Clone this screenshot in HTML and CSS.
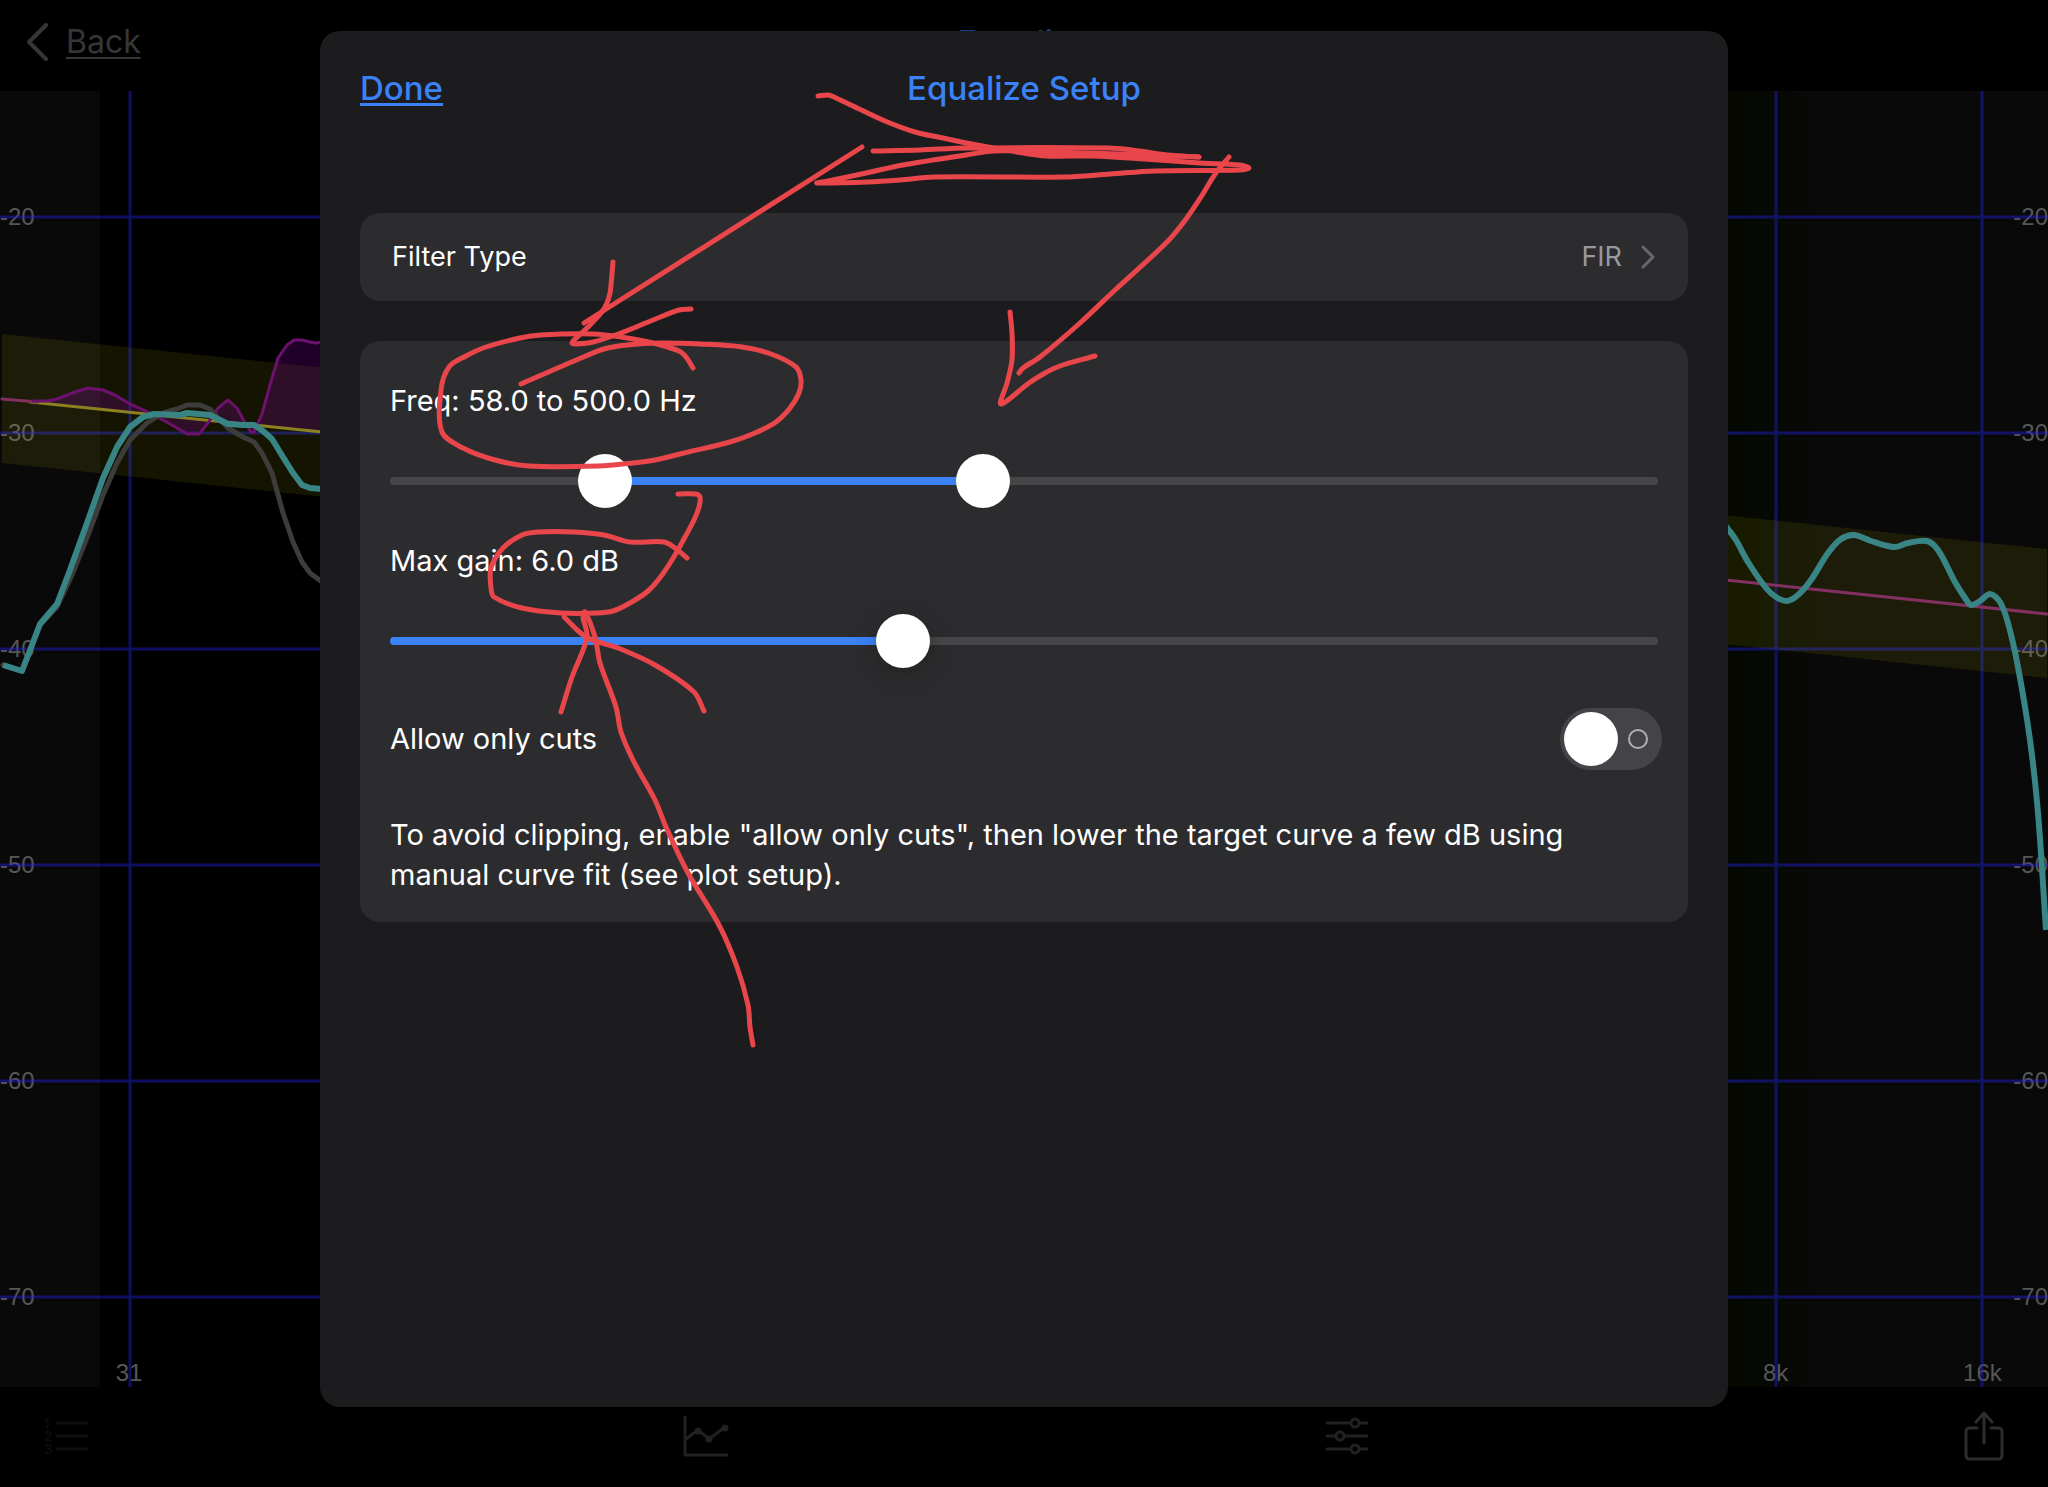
FILE: index.html
```html
<!doctype html>
<html lang="en">
<head>
    <meta charset="UTF-8">
    <meta name="viewport" content="width=device-width, initial-scale=1.0">
    <title>Equalize Setup</title>
    <link rel="stylesheet" href="styles.css">
</head>
<body>
    <div class="app">
        <header class="navbar">
            <button type="button" class="back">
                <svg width="22" height="38" viewBox="0 0 22 38"><path d="M20 2L3 19l17 17"/></svg>
                <span>Back</span>
            </button>
            <h1>Equalize</h1>
        </header>

        <main class="plot">
            <div class="scale left">
                <span>-20</span><span>-30</span><span>-40</span><span>-50</span><span>-60</span><span>-70</span>
            </div>
            <div class="scale right">
                <span>-20</span><span>-30</span><span>-40</span><span>-50</span><span>-60</span><span>-70</span>
            </div>
            <span class="freq" style="left:6.3%">31</span>
            <span class="freq" style="left:86.7%">8k</span>
            <span class="freq" style="left:96.8%">16k</span>
            <svg class="curves" viewBox="0 91 2048 1296" preserveAspectRatio="none">
                <path class="grid" d="M0 217H2048M0 433H2048M0 649H2048M0 865H2048M0 1081H2048M0 1297H2048M130 91V1387M1776 91V1387M1982 91V1387"/>
                <polygon class="band" points="2,334 2047,549 2047,678 2,463"/>
                <polygon class="filter-fill" points="3,399 33,401 47,401 57,399 75,392 88,388 103,390 115,395 130,404 148,412 163,420 177,428 187,434 199,434 208,423 218,408 228,400 237,408 245,423 251,432 254,432 262,414 270,385 278,358 287,345 294,340 302,340 310,342 315,343 322,342 322,432"/>
                <polyline class="target" points="30,402 322,432"/>
                <polyline class="target flat" points="2,399 38,402"/>
                <polyline class="target flat" points="1726,580 2047,614"/>
                <polyline class="filter" points="33,401 47,401 57,399 75,392 88,388 103,390 115,395 130,404 148,412 163,420 177,428 187,434 199,434 208,423 218,408 228,400 237,408 245,423 251,432 254,432 262,414 270,385 278,358 287,345 294,340 302,340 310,342 315,343 322,342"/>
                <polyline class="measured" points="3,665 22,671 40,625 57,607 72,575 90,530 103,495 117,463 130,440 147,423 163,413 177,409 187,405 200,405 210,409 217,417 228,428 243,437 254,442 262,453 272,473 283,513 293,542 302,562 310,573 322,582"/>
                <polyline class="result" points="3,665 22,671 32,645 40,624 57,604 70,570 87,523 103,478 117,447 130,427 143,417 154,414 180,415 187,413 210,415 228,424 243,425 254,425 263,431 272,439 283,457 293,473 302,485 310,488 322,489"/>
                <polyline class="result smooth" points="1724,524 1728,529 1736,540 1748,562 1766,588 1776,597 1787,601 1798,595 1811,580 1828,553 1841,539 1854,535 1871,541 1894,547 1908,543 1927,541 1938,550 1955,582 1965,598 1971,605 1980,601 1990,594 2000,602 2008,623 2018,667 2030,740 2038,813 2046,930"/>
            </svg>
        </main>

        <footer class="toolbar">
            <button type="button" class="faint" aria-label="Measurements">
                <svg width="44" height="44" viewBox="0 0 44 44">
                    <path d="M13 9h30M13 22h30M13 35h30"/>
                    <text x="0" y="14">1</text><text x="0" y="27">2</text><text x="0" y="40">3</text>
                </svg>
            </button>
            <button type="button" aria-label="Plot setup">
                <svg width="46" height="44" viewBox="0 0 46 44">
                    <path d="M2 3v38h42M3 25l12-9 11 9 16-12"/>
                    <circle class="dot" cx="15" cy="17" r="2"/><circle class="dot" cx="26" cy="25" r="2"/><circle class="dot" cx="42" cy="14" r="2"/>
                </svg>
            </button>
            <button type="button" aria-label="Equalize setup">
                <svg width="44" height="44" viewBox="0 0 44 44">
                    <path d="M2 9h24M35 9h7M2 22h9M20 22h22M2 35h24M35 35h7"/>
                    <circle cx="30" cy="9" r="4"/><circle cx="15" cy="22" r="4"/><circle cx="30" cy="35" r="4"/>
                </svg>
            </button>
            <button type="button" class="share" aria-label="Share">
                <svg width="40" height="50" viewBox="0 0 40 50">
                    <path d="M13 17H6q-4 0-4 4v23q0 4 4 4h28q4 0 4-4V21q0-4-4-4h-7M20 32V2M12 11l8-9 8 9"/>
                </svg>
            </button>
        </footer>
    </div>

    <section class="modal" role="dialog" aria-labelledby="title">
        <header class="modal-head">
            <button type="button" class="done">Done</button>
            <h2 id="title">Equalize Setup</h2>
        </header>

        <button type="button" class="card type-row">
            <span>Filter Type</span>
            <span class="value">FIR</span>
            <svg width="16" height="24" viewBox="0 0 16 24"><path d="M3 2l10 10L3 22"/></svg>
        </button>

        <div class="card settings">
            <label for="freq-low">Freq: 58.0 to 500.0 Hz</label>
            <div class="range" style="--from:15.5%;--to:46.6%">
                <input type="range" id="freq-low" min="0" max="1000" value="155">
                <input type="range" aria-label="Upper frequency" min="0" max="1000" value="466">
            </div>
            <label for="gain">Max gain: 6.0 dB</label>
            <div class="range single" style="--from:0%;--to:40%">
                <input type="range" id="gain" min="0" max="15" value="6">
            </div>
            <div class="switch-row">
                <label for="cuts">Allow only cuts</label>
                <input type="checkbox" class="switch" id="cuts">
            </div>
            <p>To avoid clipping, enable "allow only cuts", then lower the target curve a few dB using manual curve fit (see plot setup).</p>
        </div>

        <!-- hand-drawn markup -->
        <svg class="ink" viewBox="320 31 1408 1376">
            <polyline class="smooth" points="818,96 828,95 834,97 857,108 885,121 915,132 943,138 977,145 1017,152 1046,156 1092,156 1144,159 1200,163 1240,165 1249,168 1240,170 1155,171 1110,174 1063,177 934,177 900,180 868,182 817,183 828,181 866,173 903,165 966,155 994,151 1050,152 1120,154 1199,157"/>
            <polyline class="smooth" points="873,151 920,150 966,148 1109,148 1132,150 1167,155 1199,157"/>
            <polyline class="smooth" points="862,147 584,323"/>
            <polyline class="smooth" points="613,262 611,285 610,293 607,303 601,313 587,328 575,339 572,343 576,344 593,342 621,333 653,320 679,310 691,309"/>
            <polyline class="smooth" points="521,384 581,358 604,349 627,345 661,343 700,344 742,347 771,354 796,367 801,380 799,393 790,408 776,422 755,433 730,442 684,453 655,460 633,463 598,466 529,466 495,460 463,448 442,432 441,390 449,367 466,356 486,347 520,338 541,335 593,334 621,337 653,343 679,351 686,357 693,368"/>
            <polyline class="smooth" points="1229,157 1218,170 1210,182 1201,197 1186,219 1167,242 1115,290 1080,323 1040,357 1023,368 1019,373"/>
            <polyline class="smooth" points="1010,312 1012,333 1012,360 1007,383 1001,404 1029,383 1045,373 1060,366 1095,356"/>
            <polyline class="smooth" points="678,494 696,494 700,497 699,507 694,520 685,537 675,555 662,575 648,591 630,603 613,611 597,613 561,613 522,608 494,597 491,588 491,568 503,548 522,535 538,532 574,532 604,535 630,542 664,542 675,548 687,558"/>
            <polyline class="smooth" points="561,712 572,677 587,637 583,617 585,612 595,637 600,663 616,707 621,732 634,762 655,800 666,827 688,873 719,925 737,967 748,1005 750,1027 753,1045"/>
            <polyline class="smooth" points="564,617 586,637 618,648 655,665 694,692 704,711"/>
        </svg>
    </section>

    <script>
        // turn the point lists into curves that pass through every point
        var aLine=document.querySelectorAll('.smooth');
        for(var i=0;i<aLine.length;i++){
            smooth(aLine[i]);
        }
        function dist(a,b){
            return Math.sqrt((a[0]-b[0])*(a[0]-b[0])+(a[1]-b[1])*(a[1]-b[1]));
        }
        function smooth(line){
            var p=line.getAttribute('points').split(' ').map(function (s) {
                return s.split(',').map(Number);
            });
            var t=p.map(function (c,n) {
                var a=p[Math.max(n-1,0)];
                var b=p[Math.min(n+1,p.length-1)];
                var len=dist(a,c)+dist(c,b);
                return [(b[0]-a[0])/len,(b[1]-a[1])/len];
            });
            var d='M'+p[0];
            for(var n=1;n<p.length;n++){
                var a=p[n-1];
                var b=p[n];
                var k=dist(a,b)/3;
                d+='C'+[a[0]+t[n-1][0]*k,a[1]+t[n-1][1]*k,b[0]-t[n][0]*k,b[1]-t[n][1]*k,b[0],b[1]];
            }
            var path=document.createElementNS('http://www.w3.org/2000/svg','path');
            path.setAttribute('class',line.getAttribute('class'));
            path.setAttribute('d',d);
            line.parentNode.replaceChild(path,line);
        }
    </script>
</body>
</html>
```

FILE: styles.css
```css
*{
    box-sizing: border-box;
}
body{
    margin: 0;
    background: #000;
    color: #fff;
    font-family: Inter, "Liberation Sans", sans-serif;
    font-size: 29px;
    line-height: 40px;
}
button{
    padding: 0;
    border: 0;
    background: none;
    color: inherit;
    font: inherit;
    cursor: pointer;
}
svg{
    display: block;
    fill: none;
    stroke: currentColor;
    stroke-linecap: round;
    stroke-linejoin: round;
}
h1,h2{
    margin: 0;
    font-size: 33px;
    font-weight: 500;
    text-align: center;
}

/* screen behind the dialog */
.app{
    display: flex;
    flex-direction: column;
    min-height: 100vh;
}
.navbar{
    display: grid;
    grid-template-columns: 1fr auto 1fr;
    align-items: center;
    height: 91px;
    padding: 0 26px 8px;
}
.navbar h1{
    color: #1b3f7c;
}
.back{
    display: flex;
    align-items: center;
    gap: 18px;
    color: #363636;
    font-size: 32px;
}
.back svg{
    stroke-width: 4;
}
.back span{
    text-decoration: underline 2px;
    text-underline-offset: 4px;
}
.plot{
    position: relative;
    display: flex;
    justify-content: space-between;
    flex: 1;
    background: linear-gradient(to right, #090909 4.88%, #000 4.88%, #000 50%, #050800 84.4%, #090909 89%);
    color: #575757;
    font-family: "Liberation Sans", sans-serif;
    font-size: 24px;
    line-height: 28px;
}
.scale{
    display: flex;
    flex-direction: column;
}
.scale span{
    display: flex;
    flex: 1;
    align-items: center;
    padding-top: 36px;
}
.freq{
    position: absolute;
    bottom: 0;
    transform: translateX(-50%);
}
.curves{
    position: absolute;
    inset: 0;
    width: 100%;
    height: 100%;
}
.grid{
    stroke: #2020e0;
    stroke-opacity: .44;
    stroke-width: 3;
}
.band{
    fill: #ffff00;
    fill-opacity: .08;
    stroke: none;
}
.filter-fill{
    fill: #8000a0;
    fill-opacity: .25;
    stroke: none;
}
.target{
    stroke: #8c8020;
    stroke-width: 3;
}
.flat{
    stroke: #82305f;
}
.filter{
    stroke: #6c116c;
    stroke-width: 3;
}
.measured{
    stroke: #3c3c3a;
    stroke-width: 5;
}
.result{
    stroke: #398484;
    stroke-width: 6;
    stroke-linecap: butt;
}
.toolbar{
    display: flex;
    justify-content: space-between;
    align-items: center;
    height: 100px;
    padding: 0 44px 2px;
    color: #21211f;
}
.toolbar svg{
    stroke-width: 3;
}
.toolbar text{
    fill: currentColor;
    stroke: none;
    font-size: 13px;
    font-weight: 600;
}
.toolbar .dot{
    fill: currentColor;
}
.toolbar .faint{
    color: #0f0f0f;
}
.toolbar .share{
    color: #2d2d2d;
}

/* dialog */
.modal{
    position: absolute;
    inset: 31px 0 80px;
    width: 68.75%;
    margin: 0 auto;
    padding: 0 40px;
    border-radius: 20px;
    background: #1c1c1e;
}
.modal-head{
    display: grid;
    grid-template-columns: 1fr auto 1fr;
    align-items: center;
    height: 114px;
    margin-bottom: 68px;
    color: #3b82f7;
}
.done{
    justify-self: start;
    font-size: 33px;
    font-weight: 500;
    text-decoration: underline 3px;
    text-underline-offset: 3px;
}
.card{
    width: 100%;
    margin-bottom: 40px;
    border-radius: 20px;
    background: #2c2c2e;
}
.type-row{
    display: flex;
    align-items: center;
    height: 88px;
    padding: 0 32px;
    font-size: 27px;
}
.value{
    margin-left: auto;
    margin-right: 18px;
    color: #98989e;
}
.type-row svg{
    color: #68686c;
    stroke-width: 3;
}
.settings{
    padding: 40px 26px 27px 30px;
}
.settings label{
    display: block;
}
.settings p{
    margin: 0;
}

/* the bar runs under the thumbs, one input per thumb */
.range{
    position: relative;
    height: 54px;
    margin: 33px 4px 33px 0;
}
.range::before{
    content: "";
    position: absolute;
    top: 23px;
    left: 0;
    right: 0;
    height: 8px;
    border-radius: 4px;
    background: linear-gradient(to right, #464649 var(--from), #3b82f7 var(--from), #3b82f7 var(--to), #464649 var(--to));
}
.range input{
    position: absolute;
    inset: 0;
    width: 100%;
    height: 54px;
    margin: 0;
    background: none;
    appearance: none;
    pointer-events: none;
}
.range input::-webkit-slider-thumb{
    width: 54px;
    height: 54px;
    border-radius: 50%;
    background: #fff;
    appearance: none;
    pointer-events: auto;
}
.single input::-webkit-slider-thumb{
    box-shadow: 0 6px 24px rgba(0,0,0,.25);
}
.switch-row{
    display: flex;
    justify-content: space-between;
    align-items: center;
    height: 62px;
    margin: 40px 0 45px;
}
.switch{
    display: flex;
    align-items: center;
    justify-content: space-between;
    width: 102px;
    height: 62px;
    margin: 0;
    padding: 0 14px 0 4px;
    border-radius: 31px;
    background: #444448;
    appearance: none;
}
.switch::before{
    content: "";
    width: 54px;
    height: 54px;
    border-radius: 50%;
    background: #fff;
}
.switch::after{
    content: "";
    box-sizing: border-box;
    width: 20px;
    height: 20px;
    border: 2px solid #b0b0b2;
    border-radius: 50%;
}
.ink{
    position: absolute;
    top: 0;
    left: 0;
    width: 100%;
    color: #e9464b;
    stroke-width: 5;
    pointer-events: none;
}
```
